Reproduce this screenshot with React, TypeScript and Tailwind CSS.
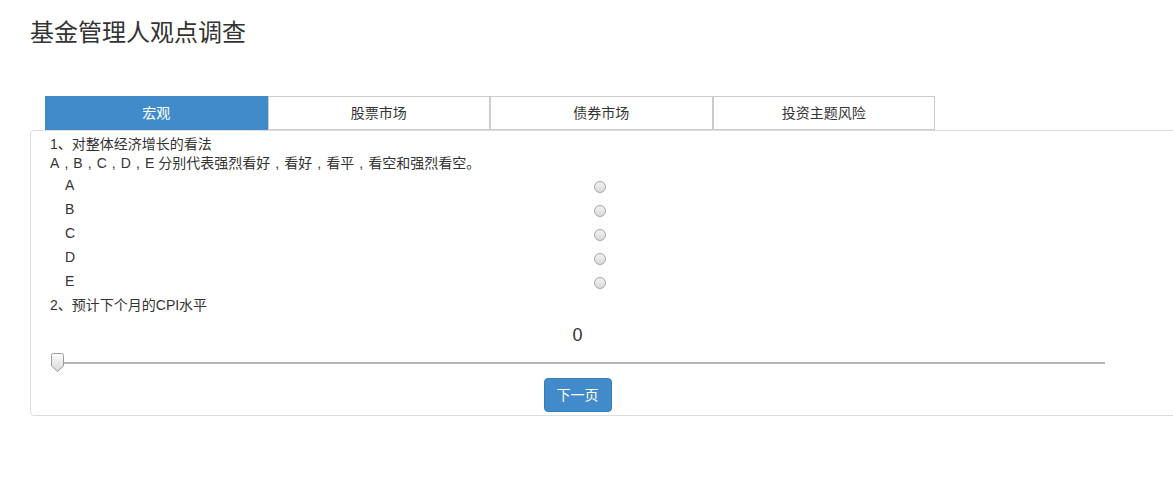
import { useState } from "react";

const tabs = ["宏观", "股票市场", "债券市场", "投资主题风险"];
const options = ["A", "B", "C", "D", "E"];

// full-width comma drawn centered in its em box, as in the original page
function Comma() {
  return <span className="inline-block w-[1em] text-center">,</span>;
}

export default function App() {
  const [active, setActive] = useState(0);
  const [choice, setChoice] = useState<string | null>(null);

  return (
    <div
      className="w-full h-[484px] overflow-hidden bg-white text-[#333]"
      style={{ fontFamily: '"Liberation Sans", Arial, "Noto Sans CJK SC", sans-serif' }}
    >
      <h3 className="pl-[30px] pt-[18px] text-[24px] leading-[30px] font-normal">
        基金管理人观点调查
      </h3>

      {/* tabs */}
      <div className="flex ml-[45px] mt-[48px]">
        {tabs.map((t, i) => (
          <button
            key={t}
            onClick={() => setActive(i)}
            className={`w-[222.5px] h-[34px] text-[14px] border ${
              i === active
                ? "bg-[#428bca] border-[#428bca] text-white"
                : "bg-white border-[#ccc] text-[#333]"
            }`}
          >
            {t}
          </button>
        ))}
      </div>

      {/* panel */}
      <div className="ml-[30px] w-[1160px] h-[286px] border border-[#ddd] rounded-l-[4px] pl-[19px] pt-[3px] text-[14px]">
        <div className="w-[1055px]">
          <div className="leading-[20px]">1、对整体经济增长的看法</div>
          <div className="leading-[19px] h-[19px] whitespace-nowrap">
            A<Comma />B<Comma />C<Comma />D<Comma />E 分别代表强烈看好<Comma />看好<Comma />看平
            <Comma />看空和强烈看空。
          </div>

          {options.map((o) => (
            <div
              key={o}
              className="flex items-center h-[24px] cursor-pointer"
              onClick={() => setChoice(o)}
            >
              <span className="w-[544px] pl-[15px]">{o}</span>
              <span className="w-[12px] h-[12px] mt-[3px] rounded-full border border-[#a5a5a5] bg-gradient-to-b from-[#f4f4f4] to-[#d8d8d8] flex items-center justify-center">
                {choice === o && <span className="w-[5px] h-[5px] rounded-full bg-[#333]" />}
              </span>
            </div>
          ))}

          <div className="leading-[24px]">2、预计下个月的CPI水平</div>

          <div className="mt-[6px] h-[24px] leading-[24px] text-center text-[18px]">0</div>

          <div className="relative h-[31px] flex items-center">
            <div className="ml-[7px] w-[1048px] h-[2px] bg-[#b5b5b5]" />
            <svg
              className="absolute left-[1px] top-[6px]"
              width="13"
              height="19"
              viewBox="0 0 13 19"
            >
              <defs>
                <linearGradient id="hg" x1="0" y1="0" x2="0" y2="1">
                  <stop offset="0" stopColor="#ffffff" />
                  <stop offset="1" stopColor="#d6d6d6" />
                </linearGradient>
              </defs>
              <path
                d="M2.5 0.5 H10.5 Q12.5 0.5 12.5 2.5 V13 L6.5 18.5 L0.5 13 V2.5 Q0.5 0.5 2.5 0.5 Z"
                fill="url(#hg)"
                stroke="#9a9a9a"
              />
            </svg>
          </div>

          <div className="flex justify-center">
            <button className="h-[34px] px-[12px] text-[14px] text-white bg-[#428bca] border border-[#357ebd] rounded-[4px]">
              下一页
            </button>
          </div>
        </div>
      </div>
    </div>
  );
}
